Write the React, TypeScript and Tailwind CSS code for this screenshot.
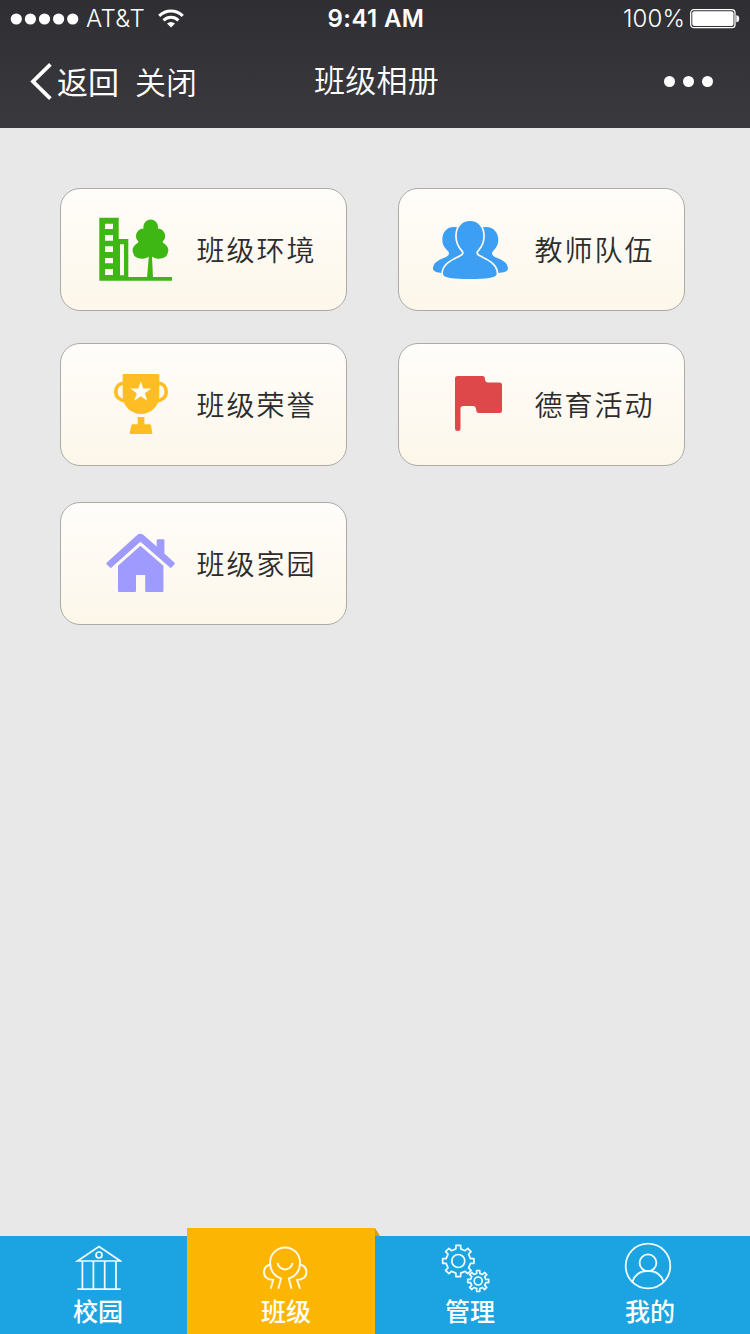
import React from "react";

const cards = [
  { title: "班级环境", icon: <CampusIcon /> },
  { title: "教师队伍", icon: <TeachersIcon /> },
  { title: "班级荣誉", icon: <TrophyIcon /> },
  { title: "德育活动", icon: <FlagIcon /> },
  { title: "班级家园", icon: <HomeIcon /> },
];

// outline of a cog with square teeth
function gearPath(cx: number, cy: number, outer: number, inner: number, teeth: number) {
  const step = (Math.PI * 2) / teeth;
  const points: string[] = [];
  for (let i = 0; i < teeth; i++) {
    const a = i * step - Math.PI / 2;
    [
      [inner, -0.25],
      [outer, -0.19],
      [outer, 0.19],
      [inner, 0.25],
    ].forEach(([r, k]) => {
      points.push(
        `${(cx + r * Math.cos(a + k * step)).toFixed(2)} ${(cy + r * Math.sin(a + k * step)).toFixed(2)}`
      );
    });
  }
  return `M${points.join("L")}Z`;
}

function CampusIcon() {
  return (
    <svg viewBox="0 0 84 73" className="h-[73px] w-[84px]" fill="#3eb614">
      <path
        fillRule="evenodd"
        d="M5.3 4.7H24.7V26H34.3V64H78V67.7H5.3ZM11 10.7V16H19V10.7ZM11 22V27.7H19V22ZM11 33.3V39H19V33.3ZM11 45V50.3H19V45ZM11 56V62H19V56ZM26 31.3V62.3H30V31.3Z"
      />
      <circle cx="56.7" cy="14" r="7.4" />
      <circle cx="49.5" cy="23" r="7.6" />
      <circle cx="63.6" cy="23" r="7.6" />
      <circle cx="46.6" cy="37.6" r="8" />
      <circle cx="66.3" cy="37.6" r="8" />
      <path d="M49 17H64L69 30L66 45.6C62 46 59.5 44.5 58 43.5L59 65H53L54.8 43.5C53 45 50 46 47 45.6L44 30Z" />
    </svg>
  );
}

function TeachersIcon() {
  return (
    <svg viewBox="0 0 84 73" className="h-[73px] w-[84px]" fill="#3d9ff3">
      <path d="M22 14C14 14 10.3 20 10.3 27C10.3 33 14 36 16.3 38.6C18 41 16.5 43 13 44.4C6 47 1 50 1 55.5C1 58.5 5 59.5 10 60L38 55L28 14.7C26 14.2 24 14 22 14Z" />
      <path d="M54 14C62 14 66.3 20 66.3 27C66.3 33 63 36 60.7 38.6C59 41 60.5 43 64 44.4C71 47 76 50 76 55.5C76 58.5 72 59.5 66 60L38 55L48 14.7C50 14.2 52 14 54 14Z" />
      <path
        stroke="#fffbf3"
        strokeWidth="3.4"
        paintOrder="stroke"
        d="M38 8C46 8 51.2 14 51.2 23C51.2 29 49 33.5 45.5 37.3C43.5 39.5 44 41.6 47 43.3C54 47 64.7 51 64.7 61C64.7 65 54 66 38 66C21 66 11 65 11 61C11 51 22 47 29 43.3C32 41.6 32.5 39.5 30.5 37.3C27 33.5 24.8 29 24.8 23C24.8 14 30 8 38 8Z"
      />
    </svg>
  );
}

function TrophyIcon() {
  return (
    <svg viewBox="0 0 84 73" className="h-[73px] w-[84px]" fill="#ffbd24">
      <path d="M30 6H64Q65.3 6 65.3 7.3V28C65.3 38 57 46 47 46S28.7 38 28.7 28V7.3Q28.7 6 30 6Z" />
      <path
        fill="none"
        stroke="#ffbd24"
        strokeWidth="3.6"
        d="M30 15.2C25 15.2 21.8 19 21.8 24S26 32.7 32 33M64 15.2C69 15.2 72.2 19 72.2 24S68 32.7 62 33"
      />
      <path
        fill="#fffdf5"
        d="M46.8 13.2L49.3 20.4L57.1 20.6L50.9 25.3L53.2 32.8L46.8 28.3L40.4 32.8L42.7 25.3L36.5 20.6L44.3 20.4Z"
      />
      <path d="M43.7 49H50.4V56.2H55.4Q56.7 56.2 57 57.5L58.3 65Q58.3 66 57.3 66H36.7Q35.7 66 35.7 65L37.3 57.5Q37.7 56.2 39 56.2H43.7Z" />
    </svg>
  );
}

function FlagIcon() {
  return (
    <svg viewBox="0 0 84 73" className="h-[73px] w-[84px]" fill="#df484a">
      <path d="M25.5 8H50.5C53.5 8 52.6 11 53.3 12.8Q53.8 14.4 55.8 14.4H67.5Q70 14.4 70 16.9V42.5Q70 45 67.5 45H46.8C43.8 45 44.6 42 43.8 40Q43.2 38 41.2 38H31.2Q28.5 38 28.5 40.7V60.5Q28.5 63 25.8 63T23 60.5V10.5Q23 8 25.5 8Z" />
    </svg>
  );
}

function HomeIcon() {
  return (
    <svg viewBox="0 0 84 73" className="h-[73px] w-[84px]" fill="#9f9bfe">
      <path d="M12.6 35.8L43.2 8Q46.3 5.6 49.5 8L62.7 19.6V13.2Q62.7 12.2 63.7 12.2H69.4Q70.4 12.2 70.4 13.2V26.5L80.6 35.8Q81.2 36.5 80.5 37.2L77.5 40.6Q76.8 41.3 76 40.6L46.4 14.8L17.5 40.6Q16.8 41.3 16 40.6L12.6 37.2Q12 36.5 12.6 35.8Z" />
      <path d="M24 38.8L46.4 18.8L69.4 38.8V64Q69.4 65 68.4 65H52.2Q51.2 65 51.2 64V48H42V64Q42 65 41 65H25Q24 65 24 64Z" />
    </svg>
  );
}

function StatusBar() {
  return (
    <div className="grid h-[38px] grid-cols-3 items-center pr-[10px] pl-[10px] font-['Inter',sans-serif] text-[24px] leading-none">
      <div className="flex items-center">
        <svg viewBox="0 0 69 12" className="h-3 w-[69px] shrink-0" fill="#fff">
          {[6.3, 20.4, 34.5, 48.6, 62.7].map((cx) => (
            <circle key={cx} cx={cx} cy="6" r="5.6" />
          ))}
        </svg>
        <span className="ml-[7px] w-[60px] font-light tracking-[0.4px]">AT&T</span>
        <svg
          viewBox="0 0 26 19"
          className="ml-[12px] h-[19px] w-[26px] shrink-0 -translate-y-px"
          fill="none"
          stroke="#fff"
          strokeWidth="3"
        >
          <path d="M1.2 6.9C8 .2 18 .2 24.8 6.9M5.5 11.3C10 7.2 16 7.2 20.5 11.3" />
          <path d="M9 14.6Q13 11.4 17 14.6L13 18.6Z" fill="#fff" stroke="none" />
        </svg>
      </div>
      <div className="pl-[2px] text-center font-semibold tracking-[0.4px] whitespace-nowrap">9:41 AM</div>
      <div className="flex items-center justify-end">
        <span className="mr-[5px] font-light tracking-[0.1px]">100%</span>
        <svg viewBox="0 0 50 20" className="h-5 w-[50px] shrink-0">
          <rect x=".7" y=".7" width="44.3" height="18" rx="3.2" fill="none" stroke="#fff" strokeWidth="1.3" />
          <rect x="2.3" y="2.3" width="41.2" height="14.8" rx="2" fill="#fff" />
          <path d="M46.3 6.2Q49.2 6.5 49.2 9.7T46.3 13.2Z" fill="#fff" />
        </svg>
      </div>
    </div>
  );
}

function TitleBar() {
  return (
    <div className="grid h-[90px] grid-cols-3 items-start px-[30px] text-[31px] leading-[40px]">
      <div className="flex pt-[23px] whitespace-nowrap">
        <svg
          viewBox="0 0 24 38"
          className="mt-px h-[38px] w-6 shrink-0"
          fill="none"
          stroke="#fff"
          strokeWidth="3.8"
        >
          <path d="M20.4 2.4L3 19.5L20.4 36.6" />
        </svg>
        <span className="ml-[3px]">返回</span>
        <span className="ml-[16px] font-['Noto_Sans_CJK_SC_DemiLight','Noto_Sans_CJK_SC',sans-serif] font-light">
          关闭
        </span>
      </div>
      <h1 className="pt-[21px] pl-[3px] text-center font-['Noto_Sans_CJK_SC_DemiLight','Noto_Sans_CJK_SC',sans-serif] tracking-[0.3px]">
        班级相册
      </h1>
      <div className="flex justify-end gap-2 pt-[38px] pr-[7px]">
        <i className="size-[11px] rounded-full bg-white" />
        <i className="size-[11px] rounded-full bg-white" />
        <i className="size-[11px] rounded-full bg-white" />
      </div>
    </div>
  );
}

function TabBar() {
  return (
    <nav className="grid h-[98px] shrink-0 grid-cols-[187px_188px_188px_187px] grid-rows-[98px] items-end bg-[#1ca4e2] text-[25px] leading-[26px] font-medium text-white">
      <div className="flex h-[98px] flex-col items-center pt-2 pl-[9px]">
        <svg viewBox="0 0 48 48" className="size-12" fill="none" stroke="#f2fdff" strokeWidth="1.7">
          <path d="M3.5 17L25 2.6L46.5 17ZM3.3 45.1H46.7M8.4 17V45M19.4 17V45M30.7 17V45M42 17V45" />
          <circle cx="25" cy="11" r="3" />
        </svg>
        <span className="mt-[5px]">校园</span>
      </div>

      {/* Active tab is taller than the bar and folds over on its right */}
      <div className="relative flex h-[106px] flex-col items-center bg-[#fdb504] pt-4 pl-[10px]">
        <svg viewBox="0 0 48 48" className="size-12" fill="none" stroke="#fffbe8" strokeWidth="1.9">
          <path d="M16.3 44.8L19 34.5C12.5 32 8.1 26.5 8.1 18.5A15 15 0 0 1 38.1 18.5C38.1 26.5 33.7 32 26.8 34.5L29.5 44.8" />
          <path d="M8.7 20.5C4 21.5 2 24.5 2 28C2 33 5 35.7 11.2 35.9L8.7 44.8M37.5 20.5C42.5 21.5 44.4 24.5 44.4 28C44.4 33 41 35.7 35 35.9L38 44.8" />
          <path d="M15.6 18.8A7.5 7.5 0 0 0 30.5 18.8" />
        </svg>
        <span className="mt-[5px]">班级</span>
        <svg viewBox="0 0 5 8" className="absolute top-0 left-full h-2 w-[5px]" fill="#d89c12">
          <path d="M0 0L5 8H0Z" />
        </svg>
      </div>

      <div className="flex h-[98px] flex-col items-center pt-2 pl-[2px]">
        <svg
          viewBox="0 0 48 48"
          className="mr-2 size-12 overflow-visible"
          fill="none"
          stroke="#f2fdff"
          strokeWidth="1.7"
          strokeLinejoin="round"
        >
          <path d={gearPath(16.3, 17, 15.8, 12.4, 8)} />
          <circle cx="16.3" cy="17" r="6.5" />
          <path d={gearPath(36.2, 37, 10.6, 7.8, 8)} />
          <circle cx="36.2" cy="37" r="4" />
        </svg>
        <span className="mt-[5px]">管理</span>
      </div>

      <div className="flex h-[98px] flex-col items-center pt-2 pr-[13px]">
        <svg
          viewBox="0 0 48 48"
          className="mr-1 size-12 overflow-visible"
          fill="none"
          stroke="#f2fdff"
          strokeWidth="1.8"
        >
          <circle cx="24" cy="22" r="22.3" />
          <circle cx="24" cy="18.8" r="8.4" />
          <path d="M8.3 38C10.5 31 16 26.8 24 26.8S37.5 31 39.7 38" />
        </svg>
        <span className="mt-[5px]">我的</span>
      </div>
    </nav>
  );
}

export default function App() {
  return (
    <div className="flex h-[1334px] w-[750px] flex-col bg-[#e8e8e8] font-['Noto_Sans_CJK_SC',sans-serif]">
      <header className="h-32 shrink-0 bg-linear-to-b from-[#2f2e33] to-[#3a393e] text-white">
        <StatusBar />
        <TitleBar />
      </header>

      <main className="grid flex-1 grid-cols-[287px_287px] grid-rows-[155px_159px_123px] content-start items-start gap-x-[51px] pt-[60px] pl-[60px]">
        {cards.map((card) => (
          <div
            key={card.title}
            className="flex h-[123px] items-center rounded-[20px] border border-[#acaba8] bg-linear-to-b from-[#fffdfa] to-[#fdf7ea] pl-[33px]"
          >
            {card.icon}
            <span className="ml-[18.5px] pb-px font-['Noto_Sans_CJK_SC_DemiLight','Noto_Sans_CJK_SC',sans-serif] text-[28px] leading-none tracking-[2px] whitespace-nowrap text-[#2c2c2c]">
              {card.title}
            </span>
          </div>
        ))}
      </main>

      <TabBar />
    </div>
  );
}
